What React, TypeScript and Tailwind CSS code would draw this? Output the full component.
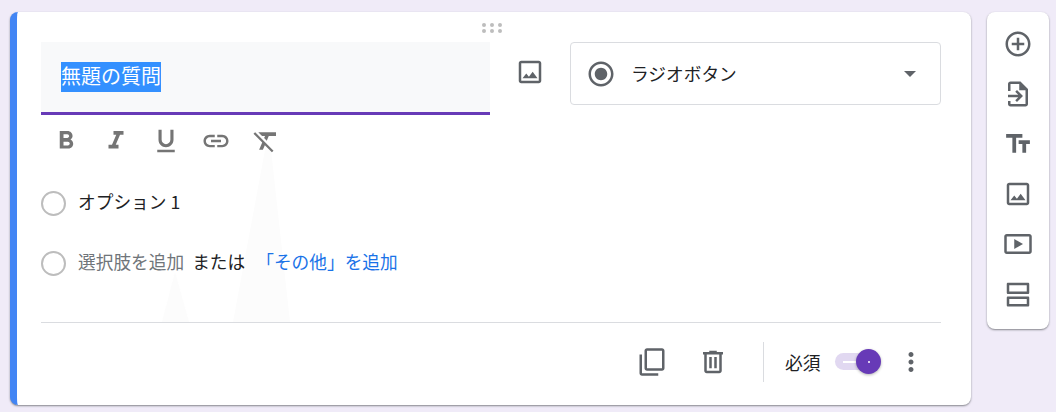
import type { ReactNode } from "react"

const paths = {
  image: "M19 5v14H5V5h14m0-2H5c-1.1 0-2 .9-2 2v14c0 1.1.9 2 2 2h14c1.1 0 2-.9 2-2V5c0-1.1-.9-2-2-2zm-4.86 8.86l-3 3.87L9 13.14 6 17h12l-3.86-5.14z",
  radio: "M12 7c-2.76 0-5 2.24-5 5s2.24 5 5 5 5-2.24 5-5-2.24-5-5-5zm0-5C6.48 2 2 6.48 2 12s4.48 10 10 10 10-4.48 10-10S17.52 2 12 2zm0 18c-4.42 0-8-3.58-8-8s3.58-8 8-8 8 3.58 8 8-3.58 8-8 8z",
  add: "M13 7h-2v4H7v2h4v4h2v-4h4v-2h-4V7zm-1-5C6.48 2 2 6.48 2 12s4.48 10 10 10 10-4.48 10-10S17.52 2 12 2zm0 18c-4.41 0-8-3.59-8-8s3.59-8 8-8 8 3.59 8 8-3.59 8-8 8z",
  bold: "M15.6 10.79c.97-.67 1.65-1.77 1.65-2.79 0-2.26-1.75-4-4-4H7v14h7.04c2.09 0 3.71-1.7 3.71-3.79 0-1.52-.86-2.82-2.15-3.42zM10 6.5h3c.83 0 1.5.67 1.5 1.5s-.67 1.5-1.5 1.5h-3v-3zm3.5 9H10v-3h3.5c.83 0 1.5.67 1.5 1.5s-.67 1.5-1.5 1.5z",
  italic: "M10 4v3h2.21l-3.42 8H6v3h8v-3h-2.21l3.42-8H18V4z",
  underline: "M12 17c3.31 0 6-2.69 6-6V3h-2.5v8c0 1.93-1.57 3.5-3.5 3.5S8.5 12.93 8.5 11V3H6v8c0 3.31 2.69 6 6 6zm-7 2v2h14v-2H5z",
  link: "M3.9 12c0-1.71 1.39-3.1 3.1-3.1h4V7H7c-2.76 0-5 2.24-5 5s2.24 5 5 5h4v-1.9H7c-1.71 0-3.1-1.39-3.1-3.1zM8 13h8v-2H8v2zm9-6h-4v1.9h4c1.71 0 3.1 1.39 3.1 3.1s-1.39 3.1-3.1 3.1h-4V17h4c2.76 0 5-2.24 5-5s-2.24-5-5-5z",
  clear: "M3.27 5L2 6.27l6.97 6.97L6.5 19h3l1.57-3.66L16.73 21 18 19.73 3.55 5.27 3.27 5zM6 5v.18L8.82 8h2.4l-.72 1.68 2.1 2.1L14.21 8H20V5H6z",
  copy: "M8 1h12c1.1 0 2 .9 2 2v14c0 1.1-.9 2-2 2H8c-1.1 0-2-.9-2-2V3c0-1.1.9-2 2-2zm0 2v14h12V3H8zM2 6h2v15h13v2H4c-1.1 0-2-.9-2-2V6z",
  trash: "M15 4V3H9v1H4v2h1v13c0 1.1.9 2 2 2h10c1.1 0 2-.9 2-2V6h1V4h-5zm2 15H7V6h10v13zM9 8h2v9H9zm4 0h2v9h-2z",
  more: "M12 8c1.1 0 2-.9 2-2s-.9-2-2-2-2 .9-2 2 .9 2 2 2zm0 2c-1.1 0-2 .9-2 2s.9 2 2 2 2-.9 2-2-.9-2-2-2zm0 6c-1.1 0-2 .9-2 2s.9 2 2 2 2-.9 2-2-.9-2-2-2z",
  title: "M2.5 4v3h5v12h3V7h5V4h-13zm19 5h-9v3h3v7h3v-7h3V9z",
  importFile: "M6 2h8l6 6v12c0 1.1-.9 2-2 2H6c-1.1 0-2-.9-2-2v-2.5h2V20h12V9h-5V4H6v5.5H4V4c0-1.1.9-2 2-2zM4 12.5h8.2l-2.4-2.4 1.4-1.4 4.8 4.8-4.8 4.8-1.4-1.4 2.4-2.4H4v-2z",
  video: "M3 4h18c1.1 0 2 .9 2 2v12c0 1.1-.9 2-2 2H3c-1.1 0-2-.9-2-2V6c0-1.1.9-2 2-2zm0 2v12h18V6H3zm6 2l7 4-7 4V8z",
  section: "M4 3h16c.55 0 1 .45 1 1v7c0 .55-.45 1-1 1H4c-.55 0-1-.45-1-1V4c0-.55.45-1 1-1zm1 2v5h14V5H5zM4 14h16c.55 0 1 .45 1 1v6c0 .55-.45 1-1 1H4c-.55 0-1-.45-1-1v-6c0-.55.45-1 1-1zm1 2v4h14v-4H5z",
}

function Icon({ d, className = "text-[#5f6368]" }: { d: string; className?: string }) {
  return (
    <svg viewBox="0 0 24 24" className={`w-[30px] h-[30px] shrink-0 fill-current ${className}`}>
      <path d={d} />
    </svg>
  )
}

function OptionRow({ children }: { children: ReactNode }) {
  return (
    <div className="flex items-center h-[60px]">
      <span className="w-[25px] h-[25px] rounded-full border-2 border-[#bdbdbd] shrink-0" />
      <div className="ml-[13px] -mr-px text-[17.7px] leading-6 -mt-[5px] -translate-x-px flex items-center">{children}</div>
    </div>
  )
}

export default function App() {
  const toolbar = [paths.bold, paths.italic, paths.underline, paths.link, paths.clear]
  const side = [paths.add, paths.importFile, paths.title, paths.image, paths.video, paths.section]

  return (
    <div className="w-[1056px] h-[412px] overflow-hidden bg-[#f0ebf8] pt-3 pl-[10px] flex items-start gap-4 font-['Noto_Sans_CJK_JP',sans-serif] text-[#202124]">
      {/* Question card */}
      <div className="relative w-[961px] h-[393px] bg-white rounded-lg border-l-[7px] border-[#4285f4] shadow-[0_1px_2px_rgba(60,64,67,0.6)] pl-6 pr-[30px] pt-[30px]">
        {/* faint watermark */}
        <svg className="absolute left-0 top-0 w-full h-full pointer-events-none" viewBox="0 0 954 393">
          <polygon points="145,310 172,310 158,260" fill="#fcfcfc" />
          <polygon points="216,310 273,310 254,138 248,138" fill="#fcfcfc" />
        </svg>

        {/* drag handle */}
        <div className="absolute left-[465px] top-[11px] grid grid-cols-3 gap-x-[3.75px] gap-y-[2px]">
          {[0, 1, 2, 3, 4, 5].map((i) => (
            <span key={i} className="w-[4px] h-[4px] rounded-full bg-[#bdbdbd]" />
          ))}
        </div>

        <div className="relative flex items-start">
          <div className="w-[449px] h-[73px] bg-[#f8f9fa] border-b-[3px] border-[#673ab7] pt-5 pl-5">
            <span className="inline-block h-[30px] leading-[28px] text-[20px] bg-[#3390ff] text-white">無題の質問</span>
          </div>
          <div className="ml-[25px] mt-[15px]">
            <Icon d={paths.image} />
          </div>
          <div className="ml-[25px] w-[371px] h-[63px] border border-[#dadce0] rounded flex items-center pl-[15px] pr-6">
            <Icon d={paths.radio} />
            <span className="ml-[15px] text-[17.7px] leading-6 flex-1 -mt-0.5">ラジオボタン</span>
            <span className="w-0 h-0 border-x-[6px] border-x-transparent border-t-[6px] border-t-[#5f6368]" />
          </div>
        </div>

        <div className="relative flex items-center h-[52px] pl-[10px] gap-5">
          {toolbar.map((d, i) => (
            <Icon key={i} d={d} className="text-[#757575]" />
          ))}
        </div>

        <div className="relative mt-[6px]">
          <OptionRow>
            <span>オプション 1</span>
          </OptionRow>
          <OptionRow>
            <span className="text-[#70757a]">選択肢を追加</span>
            <span className="ml-[8px]">または</span>
            <span className="ml-[11px] text-[#1a73e8]">「その他」を追加</span>
          </OptionRow>
        </div>

        <div className="relative mt-[29px] border-t border-[#dadce0] h-[83px] flex items-center justify-end">
          <div className="flex items-center -mt-[5px]">
            <Icon d={paths.copy} />
            <div className="ml-[31px]">
              <Icon d={paths.trash} />
            </div>
            <div className="ml-[35px] w-px h-10 bg-[#dadce0]" />
            <span className="ml-[21px] text-[17.7px] leading-6">必須</span>
            <div className="ml-[14.6px] relative w-[38px] h-[17px] rounded-full bg-[#e1d8f1] flex items-center pl-2">
              <span className="w-[14px] h-[2px] bg-white" />
              <span className="absolute left-[21px] -top-1 w-[25px] h-[25px] rounded-full bg-[#673ab7] shadow-[0_1px_3px_rgba(0,0,0,0.3)] flex items-center justify-center">
                <span className="w-[2px] h-[2px] bg-white rounded-full" />
              </span>
            </div>
            <div className="ml-[23px] mr-[15px]">
              <Icon d={paths.more} />
            </div>
          </div>
        </div>
      </div>

      {/* Side toolbar */}
      <div className="w-[62px] h-[317px] bg-white rounded-lg shadow-[0_1px_2px_rgba(60,64,67,0.6)] py-[7px] flex flex-col items-center">
        {side.map((d, i) => (
          <div key={i} className="h-[50px] flex items-center justify-center">
            <Icon d={d} />
          </div>
        ))}
      </div>
    </div>
  )
}
